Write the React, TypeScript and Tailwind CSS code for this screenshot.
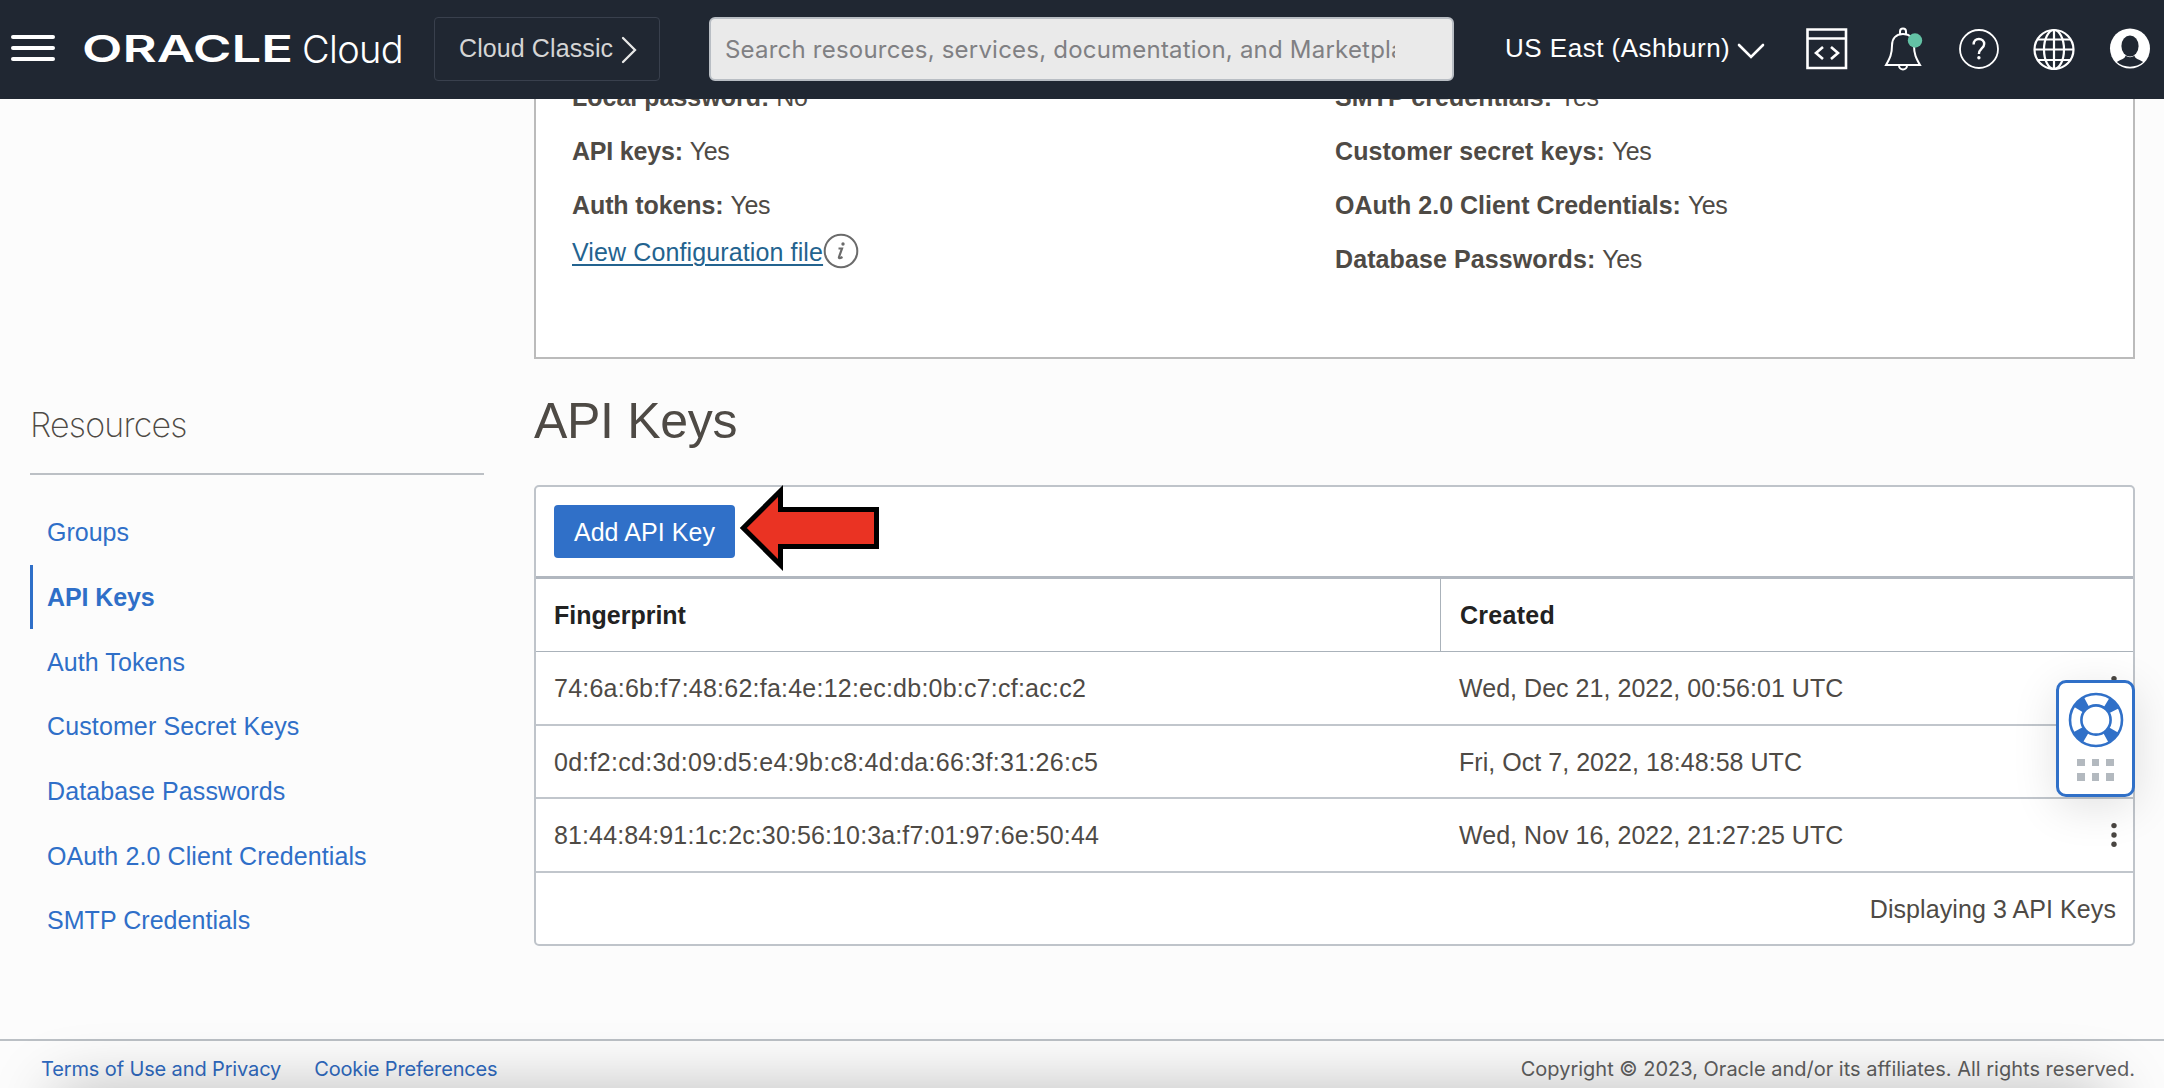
const navItems = [
  { label: 'Groups', tracking: '' },
  { label: 'API Keys', active: true, tracking: 'tracking-[-0.1px]' },
  { label: 'Auth Tokens', tracking: 'tracking-[0.08px]' },
  { label: 'Customer Secret Keys', tracking: 'tracking-[0.12px]' },
  { label: 'Database Passwords', tracking: 'tracking-[0.12px]' },
  { label: 'OAuth 2.0 Client Credentials', tracking: 'tracking-[0.1px]' },
  { label: 'SMTP Credentials', tracking: 'tracking-[0.05px]' },
];

const keys = [
  {
    fingerprint: '74:6a:6b:f7:48:62:fa:4e:12:ec:db:0b:c7:cf:ac:c2',
    created: 'Wed, Dec 21, 2022, 00:56:01 UTC',
    height: 'h-[74px]',
    tracking: 'tracking-[0.23px]',
  },
  {
    fingerprint: '0d:f2:cd:3d:09:d5:e4:9b:c8:4d:da:66:3f:31:26:c5',
    created: 'Fri, Oct 7, 2022, 18:48:58 UTC',
    height: 'h-[73px]',
    tracking: 'tracking-[0.28px]',
  },
  {
    fingerprint: '81:44:84:91:1c:2c:30:56:10:3a:f7:01:97:6e:50:44',
    created: 'Wed, Nov 16, 2022, 21:27:25 UTC',
    height: 'h-[74px]',
    tracking: 'tracking-[0.12px]',
  },
];

function Property({ label, value, tracking = '' }: { label: string; value: string; tracking?: string }) {
  return (
    <div className="flex h-[54px] items-center gap-[7px] whitespace-nowrap">
      <b className={tracking}>{label}</b>
      <span className="tracking-[-0.4px]">{value}</span>
    </div>
  );
}

function Header() {
  return (
    <header className="relative z-10 flex h-[99px] shrink-0 items-center bg-[#202732] pb-[2px] text-white">
      <div className="ml-[11px] flex w-[44px] flex-col gap-[7px] pb-[2px]">
        <i className="h-[4px] rounded-full bg-white" />
        <i className="h-[4px] rounded-full bg-white" />
        <i className="h-[4px] rounded-full bg-white" />
      </div>
      <div className="ml-[27px] w-[220px] font-[Inter,sans-serif] text-[37px] leading-none font-semibold">
        <span className="inline-block origin-left scale-x-[1.42]">ORACLE</span>
      </div>
      <div className="w-[132px] font-[Inter,sans-serif] text-[38px] leading-none font-light tracking-[-0.66px]">Cloud</div>
      <button className="flex h-[64px] w-[226px] items-center rounded-[4px] border border-[#39404d] pb-px pl-[24px] text-[25px] tracking-[0.1px] text-[#d5d5d5]">
        Cloud Classic
        <svg className="mt-[3px] ml-[8px]" width="17" height="28" viewBox="0 0 17 28" fill="none" stroke="#e8e8e8" strokeWidth="2.3">
          <path d="M2 2l12 12L2 26" strokeLinecap="round" />
        </svg>
      </button>
      <div className="ml-[49px] flex h-[64px] w-[745px] items-center rounded-[6px] border-2 border-[#b9bec4] bg-[#eaeaea] pt-[2px] pl-[14px] font-[Inter,sans-serif]">
        <span className="w-[670px] overflow-hidden text-[24px] tracking-[0.21px] whitespace-nowrap text-[#808083]">
          Search resources, services, documentation, and Marketplace
        </span>
      </div>
      <div className="ml-[51px] flex w-[301px] items-center pb-[2px] text-[26px] tracking-[0.5px]">
        US East (Ashburn)
        <svg className="mt-[6px] ml-[7px]" width="28" height="18" viewBox="0 0 28 18" fill="none" stroke="white" strokeWidth="2.6">
          <path d="M2 3l12 12L26 3" strokeLinecap="round" />
        </svg>
      </div>
      <svg width="42" height="42" viewBox="0 0 42 42" fill="none" stroke="white" strokeWidth="2.6">
        <path d="M1.5 1.5h38.5v38.5H1.5zM1.5 10.5h38.5" />
        <path d="M17 19l-7 6 7 6M25 19l7 6-7 6" />
      </svg>
      <svg className="ml-[36px]" width="42" height="44" viewBox="0 0 42 44" fill="none" stroke="white" strokeWidth="2">
        <path d="M16 7V4.500a3 3 0 0 1 6 0V7M19 7c-7 0-11 4.500-11 11.500C8 27 6 31 2 38h34c-4-7-6-11-6-19.500C30 11.500 26 7 19 7z" />
        <path d="M15 38.500a4 4 0 0 0 8 0" />
        <circle cx="31" cy="13.500" r="7.200" fill="#63c2a5" stroke="none" />
      </svg>
      <svg className="ml-[32px]" width="42" height="42" viewBox="0 0 42 42" fill="none" stroke="white" strokeWidth="1.8">
        <circle cx="21" cy="21" r="19" />
        <path d="M15.600 16.500c0-3.500 2.300-5.500 5.300-5.500s5.300 2 5.300 5c0 4.300-5.300 4.700-5.300 10" strokeWidth="2.400" />
        <circle cx="20.900" cy="29.800" r="1.700" fill="white" stroke="none" />
      </svg>
      <svg className="ml-[33px]" width="42" height="42" viewBox="0 0 42 42" fill="none" stroke="white" strokeWidth="2.200">
        <circle cx="21" cy="21.500" r="19.500" />
        <ellipse cx="21" cy="21.500" rx="10" ry="19.500" />
        <path d="M21 2v39M1.500 21.500h39M4.500 11.500h33M4.500 32h33" />
      </svg>
      <svg className="ml-[34px]" width="42" height="42" viewBox="0 0 42 42">
        <circle cx="21" cy="20.500" r="20" fill="white" />
        <ellipse cx="21" cy="18" rx="8.600" ry="10.500" fill="#202732" />
        <path d="M16.500 27.500c-.3 3.500-5.500 4-8.600 6.500 6.500 6.200 19.700 6.200 26.200 0-3.100-2.500-8.300-3-8.600-6.500-2.500 2.200-6.500 2.200-9 0z" fill="#202732" />
      </svg>
    </header>
  );
}

function HelpWidget() {
  return (
    <div className="absolute top-[193px] right-[-2px] flex h-[117px] w-[79px] flex-col items-center rounded-[10px] border-[3.4px] border-[#3070c8] bg-white pt-[9px] shadow-[0_10px_45px_rgba(0,0,0,0.12)]">
      <svg width="56" height="56" viewBox="-28 -28 56 56" fill="none">
        <circle r="20.500" stroke="#3070c8" strokeWidth="10.500" strokeDasharray="11 21.200" strokeDashoffset="-10.600" />
        <circle r="26" stroke="#3070c8" strokeWidth="2.600" />
        <circle r="14.600" stroke="#3070c8" strokeWidth="2.600" />
      </svg>
      <div className="mt-[11px] grid grid-cols-3 gap-x-[7px] gap-y-[7px]">
        {Array.from({ length: 6 }, (_, i) => (
          <i key={i} className="size-[7.4px] bg-[#b3b9bf]" />
        ))}
      </div>
    </div>
  );
}

function KeysTable() {
  return (
    <section className="relative w-[1601px] rounded-[5px] border-2 border-[#bfc4ca] bg-white">
      <div className="flex h-[92px] items-center border-b-[3px] border-[#b1b7bf] pl-[18px]">
        <button className="h-[53px] w-[181px] rounded-[4px] bg-[#3070c8] text-[25px] tracking-[0.08px] text-white">Add API Key</button>
        <svg className="mb-[7px] ml-[4px] shrink-0" width="140" height="90" viewBox="0 0 140 90">
          <path d="M4.300 45L41.500 8V26.500H137.500V63.500H41.500V82Z" fill="#ea3323" stroke="black" strokeWidth="5" />
        </svg>
      </div>
      <div className="flex h-[73px] border-b border-[#aab2ba] font-bold text-[#222]">
        <div className="flex w-[905px] items-center border-r border-[#aab2ba] pl-[18px]">Fingerprint</div>
        <div className="flex items-center pl-[19px] tracking-[0.27px]">Created</div>
      </div>
      {keys.map((k) => (
        <div key={k.fingerprint} className={`flex items-center border-b-2 border-[#c1c6cc] ${k.height}`}>
          <div className={`w-[905px] pl-[18px] ${k.tracking}`}>{k.fingerprint}</div>
          <div className="flex-1 pl-[18px] tracking-[0.04px]">{k.created}</div>
          <svg className="mr-[15px]" width="8" height="26" viewBox="0 0 8 26" fill="#4a4642">
            <circle cx="4" cy="3.600" r="2.700" />
            <circle cx="4" cy="13" r="2.700" />
            <circle cx="4" cy="22.300" r="2.700" />
          </svg>
        </div>
      ))}
      <div className="flex h-[71px] items-center justify-end pr-[17px] tracking-[0.08px]">Displaying 3 API Keys</div>
      <HelpWidget />
    </section>
  );
}

export default function App() {
  return (
    <div className="relative flex h-[1088px] w-[2164px] flex-col overflow-hidden bg-[#fcfcfc] font-['Liberation_Sans',Arial,sans-serif] text-[25px] leading-[30px] text-[#4e4a45]">
      <Header />
      <main className="flex h-[940px] shrink-0">
        <aside className="ml-[30px] w-[504px] shrink-0 pt-[306px]">
          <div className="w-[454px]">
            <h2 className="flex h-[70px] items-start border-b-2 border-[#bcc0c5] font-[Inter,sans-serif] text-[34px] leading-[40px] font-extralight tracking-[-0.8px]">
              Resources
            </h2>
            <nav className="mt-[25px] flex flex-col text-[#2f6fc8]">
              {navItems.map((n) => (
                <a
                  key={n.label}
                  className={`flex h-[64.7px] items-center border-l-[3.5px] pl-[14px] ${n.tracking} ${n.active ? 'border-[#2f6fc8] font-bold' : 'border-transparent'}`}
                >
                  {n.label}
                </a>
              ))}
            </nav>
          </div>
        </aside>
        <div>
          <section className="mt-[-29px] flex h-[289px] w-[1601px] border-2 border-t-0 border-[#bbb] bg-white pl-[36px]">
            <div className="w-[763px]">
              <Property label="Local password:" value="No" />
              <Property label="API keys:" value="Yes" tracking="tracking-[-0.2px]" />
              <Property label="Auth tokens:" value="Yes" tracking="tracking-[-0.1px]" />
              <div className="flex h-[40px] items-center">
                <a className="tracking-[0.12px] text-[#23638f] underline decoration-2 underline-offset-[3px]">View Configuration file</a>
                <svg className="mt-[-2px]" width="36" height="36" viewBox="0 0 36 36" fill="none" stroke="#6b6b6b">
                  <circle cx="18" cy="18" r="16.300" strokeWidth="2" />
                  <path d="M15.500 15.500h3.500l-3 8.500c-.5 1.500.8 1.500 3.500 0" strokeWidth="2.200" />
                  <circle cx="20" cy="11" r="1.700" fill="#6b6b6b" stroke="none" />
                </svg>
              </div>
            </div>
            <div>
              <Property label="SMTP credentials:" value="Yes" tracking="tracking-[0.05px]" />
              <Property label="Customer secret keys:" value="Yes" tracking="tracking-[0.08px]" />
              <Property label="OAuth 2.0 Client Credentials:" value="Yes" />
              <Property label="Database Passwords:" value="Yes" tracking="tracking-[0.1px]" />
            </div>
          </section>
          <h1 className="flex h-[126px] items-center pb-[3px] text-[50px] tracking-[-0.3px]">API Keys</h1>
          <KeysTable />
        </div>
      </main>
      <footer className="flex h-[49px] shrink-0 border-t-2 border-[#bbc0c5] px-[30px] pt-[16px] font-[Inter,sans-serif] text-[20px] leading-[24px]">
        <a className="ml-[11px] tracking-[-0.13px] text-[#2f6ac0]">Terms of Use and Privacy</a>
        <a className="ml-[33px] tracking-[-0.16px] text-[#2f6ac0]">Cookie Preferences</a>
        <span className="mr-[-1px] ml-auto text-[#5f5f5f]">Copyright © 2023, Oracle and/or its affiliates. All rights reserved.</span>
      </footer>
      <div className="pointer-events-none absolute inset-x-[64px] top-[1098px] h-[40px] shadow-[0_0_64px_8px_rgba(0,0,0,0.28)]" />
    </div>
  );
}
